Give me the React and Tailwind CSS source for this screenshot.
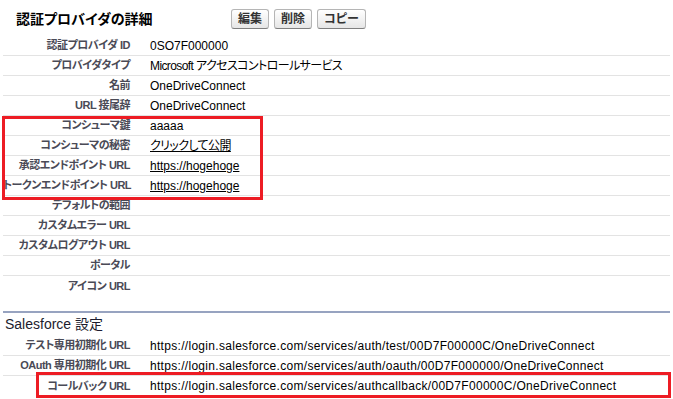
const detailRows = [
  { label: '認証プロバイダ ID', value: '0SO7F000000' },
  { label: 'プロバイダタイプ', value: 'Microsoft アクセスコントロールサービス', jp: true },
  { label: '名前', value: 'OneDriveConnect' },
  { label: 'URL 接尾辞', value: 'OneDriveConnect' },
  { label: 'コンシューマ鍵', value: 'aaaaa' },
  { label: 'コンシューマの秘密', value: 'クリックして公開', link: true, jp: true },
  { label: '承認エンドポイント URL', value: 'https://hogehoge', link: true },
  { label: 'トークンエンドポイント URL', value: 'https://hogehoge', link: true },
  { label: 'デフォルトの範囲', value: '' },
  { label: 'カスタムエラー URL', value: '' },
  { label: 'カスタムログアウト URL', value: '' },
  { label: 'ポータル', value: '' },
  { label: 'アイコン URL', value: '' },
];

const sfRows = [
  { label: 'テスト専用初期化 URL', value: 'https://login.salesforce.com/services/auth/test/00D7F00000C/OneDriveConnect', wide: true },
  { label: 'OAuth 専用初期化 URL', value: 'https://login.salesforce.com/services/auth/oauth/00D7F000000/OneDriveConnect', wide: true },
  { label: 'コールバック URL', value: 'https://login.salesforce.com/services/authcallback/00D7F00000C/OneDriveConnect', wide: true },
];

function Row({ row, last }) {
  const spacing = row.jp ? 'tracking-[-0.6px]' : row.wide ? 'tracking-[0.3px]' : '';
  return (
    <div className={`flex items-center h-[20px] ${last ? '' : 'border-b border-[#e3e3e3]'}`}>
      <div className="w-[127px] shrink-0 text-right font-bold text-[11px] tracking-[-0.5px] text-[#4a4a56] whitespace-nowrap">
        {row.label}
      </div>
      <div className={`pl-[20px] text-[12px] text-black whitespace-nowrap ${spacing}`}>
        {row.link ? <span className="underline">{row.value}</span> : row.value}
      </div>
    </div>
  );
}

function Btn({ children }) {
  return (
    <button className="h-[20px] px-[6px] rounded-[3px] border border-[#b5b5b5] border-b-[#7f7f7f] bg-gradient-to-b from-white to-[#e6e6e6] text-[12px] font-bold text-[#333] leading-none">
      {children}
    </button>
  );
}

export default function App() {
  return (
    <div className="relative w-[673px] h-[399px] bg-white overflow-hidden px-[3px] [font-family:'Liberation_Sans','Noto_Sans_CJK_JP',sans-serif] [font-feature-settings:'palt']">
      <div className="flex items-center h-[36px] pt-[2px]">
        <h2 className="w-[228px] pl-[13px] text-[14px] font-bold text-black">認証プロバイダの詳細</h2>
        <div className="flex gap-[5px]">
          <Btn>編集</Btn>
          <Btn>削除</Btn>
          <Btn>コピー</Btn>
        </div>
      </div>

      <div className="flex flex-col">
        {detailRows.map((r, i) => (
          <Row key={r.label} row={r} last={i === detailRows.length - 1} />
        ))}
      </div>

      <div className="mt-[15px] h-[2px] bg-[#97a3c0]" />
      <div className="h-[23px] flex items-center pl-[2px] text-[14px] text-[#1c1c2e]">Salesforce 設定</div>

      <div className="flex flex-col">
        {sfRows.map((r, i) => (
          <Row key={r.label} row={r} last={i === sfRows.length - 1} />
        ))}
      </div>

      {/* annotation boxes */}
      <div className="absolute left-[2px] top-[116px] w-[261px] h-[84px] border-[3px] border-[#ed1c24]" />
      <div className="absolute left-[36px] top-[372px] w-[635px] h-[26px] border-[3px] border-[#ed1c24]" />
    </div>
  );
}
